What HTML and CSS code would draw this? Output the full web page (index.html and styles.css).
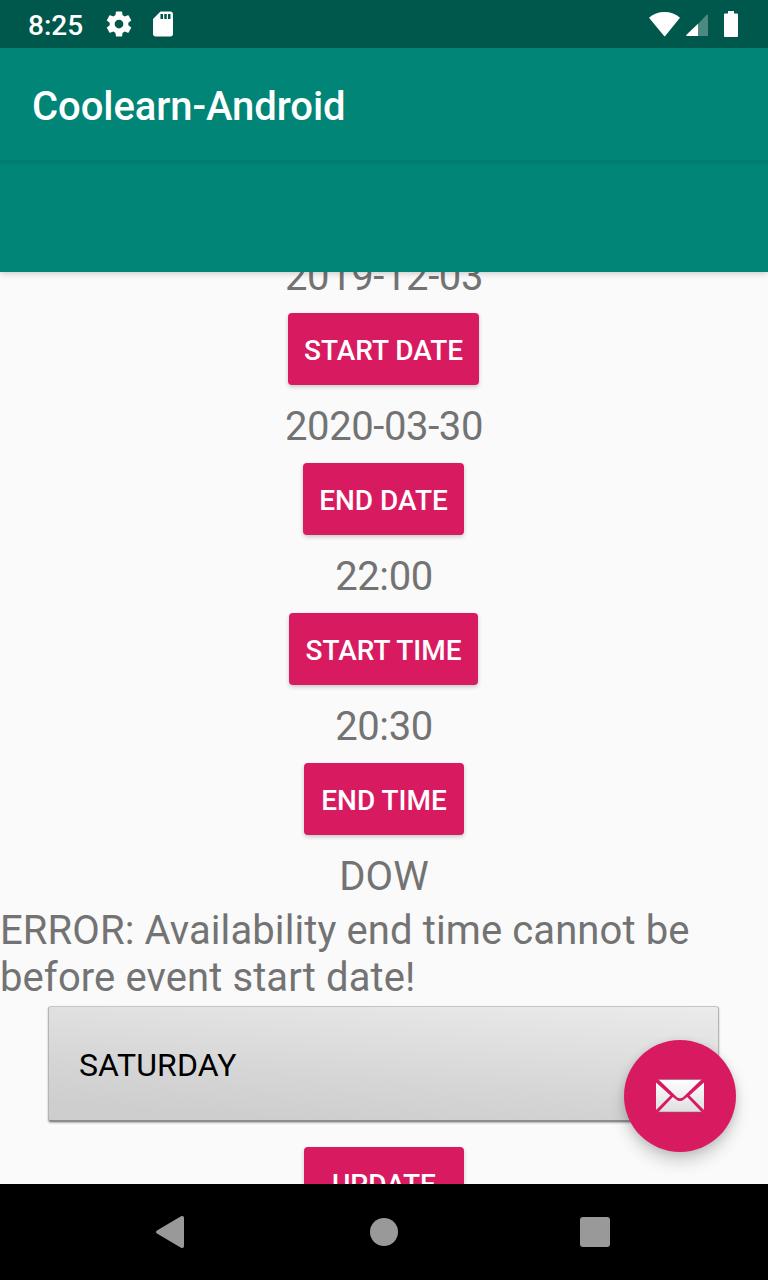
FILE: index.html
```html
<!DOCTYPE html>
<html lang="en">
<head>
<meta charset="utf-8">
<title>Coolearn-Android</title>
<link rel="stylesheet" href="styles.css">
</head>
<body>
<div class="screen">
  <div class="status-bar">
    <span class="clock">8:25</span>
    <svg class="status-icon gear" viewBox="0 0 24 24"><path d="M19.43 12.98c.04-.32.07-.64.07-.98s-.03-.66-.07-.98l2.11-1.65c.19-.15.24-.42.12-.64l-2-3.46c-.12-.22-.39-.3-.61-.22l-2.49 1c-.52-.4-1.08-.73-1.69-.98l-.38-2.65C14.46 2.18 14.25 2 14 2h-4c-.25 0-.46.18-.49.42l-.38 2.65c-.61.25-1.17.59-1.69.98l-2.49-1c-.23-.09-.49 0-.61.22l-2 3.46c-.13.22-.07.49.12.64l2.11 1.65c-.04.32-.07.65-.07.98s.03.66.07.98l-2.11 1.65c-.19.15-.24.42-.12.64l2 3.46c.12.22.39.3.61.22l2.49-1c.52.4 1.08.73 1.69.98l.38 2.65c.03.24.24.42.49.42h4c.25 0 .46-.18.49-.42l.38-2.65c.61-.25 1.17-.59 1.69-.98l2.49 1c.23.09.49 0 .61-.22l2-3.46c.12-.22.07-.49-.12-.64l-2.11-1.65zM12 15.5c-1.93 0-3.500-1.570-3.500-3.500s1.570-3.500 3.500-3.500 3.500 1.570 3.500 3.500-1.570 3.500-3.500 3.500z"/></svg>
    <svg class="status-icon card" viewBox="0 0 24 24"><path d="M18 2h-8L4.020 8 4 20c0 1.100.9 2 2 2h12c1.100 0 2-.9 2-2V4c0-1.100-.9-2-2-2zm-6 6h-2V4h2v4zm3 0h-2V4h2v4zm3 0h-2V4h2v4z"/></svg>
    <svg class="wifi" viewBox="0 0 31 25"><path d="M15.500 24.500 0 5.800C4 2 9.500 0 15.500 0S27 2 31 5.800L16.200 23.900Q15.500 24.500 14.800 23.900Z"/></svg>
    <svg class="signal" viewBox="0 0 22 22"><path class="faint" d="M12 10 20.500 1Q22 0 22 1V22H12Z"/><path d="M12 9.800V22H1Q-.5 22 .5 20.800Z"/></svg>
    <svg class="battery" viewBox="0 0 14 26"><path d="M4 0h6v2.500h3q1 0 1 1V25q0 1-1 1H1q-1 0-1-1V3.500q0-1 1-1h3z"/></svg>
  </div>
  <header class="app-bar"><h1 class="title">Coolearn-Android</h1></header>
  <div class="toolbar"></div>
  <main class="content">
    <div class="form">
      <div class="label value">2019-12-03</div>
      <button class="btn w191">START DATE</button>
      <div class="label value">2020-03-30</div>
      <button class="btn w161">END DATE</button>
      <div class="label value">22:00</div>
      <button class="btn w189">START TIME</button>
      <div class="label value">20:30</div>
      <button class="btn w160">END TIME</button>
      <div class="label">DOW</div>
      <div class="label error">ERROR: Availability end time cannot be before event start date!</div>
      <div class="spinner">SATURDAY</div>
      <button class="btn w160">UPDATE</button>
    </div>
  </main>
  <div class="fab">
    <svg class="mail" viewBox="0 0 48 34">
      <defs><linearGradient id="paper" gradientUnits="userSpaceOnUse" x1="0" y1="0" x2="0" y2="34"><stop offset="0" stop-color="#fff"/><stop offset="1" stop-color="#dedede"/></linearGradient></defs>
      <g fill="url(#paper)">
        <path d="M2.500 .5h43L27 18.200q-3 2.300-6 0Z"/>
        <path d="M0 3.500 14.500 16.500 0 31Z"/>
        <path d="M48 3.500 33.500 16.500 48 31Z"/>
        <path d="M2.500 33 16.800 18l3.200 2.600q4 3 8 0l3.200-2.600L45.500 33Z"/>
      </g>
      <path class="mail-edge" d="M2.500 33h43M2.500 .5h43"/>
    </svg>
  </div>
  <nav class="nav-bar">
    <svg class="back" viewBox="0 0 28 32"><path d="M1 14.500 25 .3Q28-.7 28 2V30q0 2.700-3 1.700L1 17.500Q-1 16 1 14.500Z"/></svg>
    <span class="home"></span>
    <span class="recent"></span>
  </nav>
</div>
</body>
</html>
```
FILE: styles.css
```css
* { box-sizing: border-box; }
body { margin: 0; font-family: Roboto, "Liberation Sans", sans-serif; }
.screen { position: relative; display: flex; flex-direction: column; width: 768px; height: 1280px; overflow: hidden; background: #fafafa; }
.status-bar { display: flex; align-items: center; height: 48px; padding: 0 30px 0 28px; background: #00574b; fill: #fff; flex: none; }
.clock { width: 76px; padding-top: 4px; color: #fff; font-size: 28px; font-weight: 500; line-height: 34px; }
.status-icon { width: 30px; height: 30px; }
.card { margin-left: 14px; }
.wifi { width: 31px; height: 25px; margin-left: auto; }
.signal { width: 22px; height: 22px; margin: 2px 16px 0 6px; }
.faint { opacity: .3; }
.battery { width: 14px; height: 26px; }
.app-bar { z-index: 2; display: flex; align-items: center; height: 112px; padding: 6px 32px 0; background: #008577; flex: none; }
.title { margin: 0; color: #fff; font-size: 40px; font-weight: 500; line-height: 48px; letter-spacing: -.08px; }
.toolbar { z-index: 1; height: 112px; background: linear-gradient(#007b6e, #008577 7px); box-shadow: 0 1px 7px rgba(0,0,0,.22); flex: none; }
.content { height: 912px; overflow: hidden; flex: none; }
.form { display: flex; flex-direction: column; align-items: center; margin-top: -25px; }
.label { height: 54px; padding-top: 6px; color: #737373; font-size: 40px; line-height: 47px; flex: none; }
.value { letter-spacing: -.4px; }
.error { width: 100%; height: 101px; letter-spacing: .1px; }
.btn { height: 72px; margin: 12px 0; padding: 4px 0 0; border: 0; border-radius: 4px; background: #d81b60; color: #fff; font: 500 28px/34px Roboto, "Liberation Sans", sans-serif; white-space: nowrap; box-shadow: 0 2px 4px rgba(0,0,0,.2); flex: none; }
.w191 { width: 191px; margin-right: 1px; }
.w189 { width: 189px; margin-right: 1px; }
.w161 { width: 161px; margin-right: 1px; }
.w160 { width: 160px; }
.spinner { display: flex; align-items: center; width: 671px; height: 116px; margin: 4px 1px 13px 0; padding: 2px 0 0 30px; border: 1px solid #b4b4b4; border-top-color: #c6c6c6; border-bottom: 2px solid #8c8c8c; border-radius: 3px; background: linear-gradient(184deg, #ebebeb, #e1e1e1 28%, #d6d6d6 60%, #cecece 90%); color: #000; font-size: 32px; line-height: 38px; letter-spacing: .1px; box-shadow: 0 1px 2px rgba(0,0,0,.3); flex: none; }
.fab { position: absolute; left: 624px; top: 1040px; display: flex; align-items: center; justify-content: center; width: 112px; height: 112px; border-radius: 50%; background: #d81b60; box-shadow: 0 10px 16px rgba(0,0,0,.16), 0 2px 9px rgba(0,0,0,.12); }
.mail { width: 48px; height: 34px; }
.mail-edge { fill: none; stroke: #8c6470; stroke-opacity: .55; stroke-width: 1; }
.nav-bar { z-index: 1; display: flex; align-items: center; height: 96px; padding: 0 158px 0 156px; background: #000; flex: none; }
.back { width: 28px; height: 32px; fill: #999; }
.home { width: 28px; height: 28px; margin-left: 186px; border-radius: 50%; background: #999; }
.recent { width: 30px; height: 30px; margin-left: auto; border-radius: 3px; background: #999; }
```
